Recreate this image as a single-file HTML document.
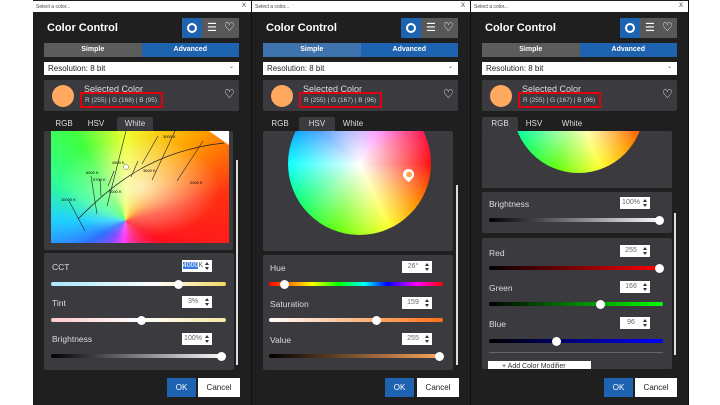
<!DOCTYPE html>
<html><head><meta charset="utf-8">
<style>
*{margin:0;padding:0;box-sizing:border-box}
body{width:720px;height:405px;background:#fff;position:relative;overflow:hidden;font-family:"Liberation Sans",sans-serif}
.p{position:absolute;top:0;width:219px;height:405px;background:#1f1f1f;overflow:hidden;border-right:1px solid #111}
.a{position:absolute}
.tb{left:0;top:1px;width:100%;height:11px;background:#fff;font-size:5px;color:#444;padding:3px 0 0 3px}
.tb span{position:absolute;right:5px;top:2px;font-size:6px}
.tt{left:14px;top:22px;color:#fff;font-weight:bold;font-size:11px}
.ig{left:149px;top:18px;width:57px;height:20px;background:#585858}
.ig .b{position:absolute;left:0;top:0;width:20px;height:20px;background:#1e63b0}
.sa{left:11px;top:43px;width:195px;height:14px;font-size:7px;font-weight:bold;color:#fff;display:flex}
.sa div{flex:1;text-align:center;line-height:14px}
.dd{left:11px;top:62px;width:195px;height:13px;background:#fff;font-size:8px;color:#222;padding:2px 0 0 4px}
.dd span{position:absolute;right:5px;top:1px;font-size:6px;color:#555}
.cd{left:11px;top:80px;width:195px;height:31px;background:#3a3a3f;border-radius:2px}
.sw{left:8px;top:5px;width:22px;height:22px;border-radius:50%;background:#ffa860}
.sc{left:40px;top:4px;font-size:9px;color:#ddd}
.rb{left:36px;top:12px;width:83px;height:16px;border:2px solid #e00010;font-size:6.5px;color:#ccc;padding:3px 0 0 3px}
.ht{left:180px;top:7px;color:#fff;font-size:12px}
.tab{top:117px;height:14px;font-size:8px;color:#ddd;line-height:14px;text-align:center}
.tab.on{background:#3a3a3f;border-radius:2px 2px 0 0}
.box{background:#3a3a3f;border-radius:2px}
.lb{font-size:8.5px;color:#ddd}
.in{width:30px;height:12px;background:#fff;font-size:7px;color:#666;padding:2px 8px 0 0;text-align:center}
.in:after{content:"";position:absolute;right:3px;top:2px;border:2.5px solid transparent;border-bottom:3px solid #333;border-top:0}
.in:before{content:"";position:absolute;right:3px;top:7px;border:2.5px solid transparent;border-top:3px solid #333;border-bottom:0}
.tr{height:4px;border-radius:2px}
.th{width:9px;height:9px;border-radius:50%;background:#fff;margin-top:-2.5px;position:absolute;top:0}
.sb{width:2px;background:#ddd}
.ok{top:378px;width:29px;height:19px;background:#1e63b0;color:#fff;font-size:8px;text-align:center;line-height:19px}
.cn{top:378px;width:42px;height:19px;background:#fff;color:#222;font-size:8px;text-align:center;line-height:19px}
</style></head><body>

<!-- PANEL 1 -->
<div class="p" style="left:33px">
 <div class="a tb">Select a color...<span>X</span></div>
 <div class="a tt">Color Control</div>
 <div class="a ig"><div class="b"><div style="position:absolute;left:5px;top:5px;width:10px;height:10px;border:2.5px solid #fff;border-radius:50%"></div></div>
  <div style="position:absolute;left:25px;top:3px;color:#fff;font-size:11px">☰</div><div style="position:absolute;left:42px;top:2px;color:#fff;font-size:12px">♡</div></div>
 <div class="a sa"><div style="background:#5c5c5c">Simple</div><div style="background:#1e63b0">Advanced</div></div>
 <div class="a dd">Resolution: 8 bit<span>⌄</span></div>
 <div class="a cd"><div class="a sw"></div><div class="a sc">Selected Color</div><div class="a rb">R (255) | G (168) | B (95)</div><div class="a ht">♡</div></div>
 <div class="a tab" style="left:18px;width:26px">RGB</div>
 <div class="a tab" style="left:50px;width:26px">HSV</div>
 <div class="a tab on" style="left:84px;width:36px">White</div>
 <div class="a box" style="left:11px;top:131px;width:189px;height:119px"></div>
 <div class="a" style="left:18px;top:131px;width:178px;height:112px;background:radial-gradient(ellipse 45% 45% at 50% 50%,rgba(255,255,255,.7),rgba(255,255,255,0) 100%),conic-gradient(from 0deg at 42% 80%,#f0ff30 0deg,#ffa000 40deg,#ff3010 75deg,#ff1020 120deg,#ff3090 160deg,#ff40ff 185deg,#8050ff 215deg,#3070ff 240deg,#20d0ff 270deg,#30ff90 300deg,#40ff40 330deg,#f0ff30 360deg)">
  <svg width="178" height="112" style="position:absolute;left:0;top:0" font-family="Liberation Sans" font-size="4" fill="#000">
   <polygon points="158,0 178,0 178,14" fill="#fff"/>
   <path d="M27,88 C60,55 100,20 173,12" stroke="#222" stroke-width=".7" fill="none"/>
   <path d="M18,70 L34,100 M40,45 L46,83 M49,48 L50,65 M63,40 L57,55 M75,0 L56,75 M87,30 L80,46 M107,5 L91,33 M124,0 L101,49 M152,10 L126,50" stroke="#222" stroke-width=".6"/>
   <circle cx="75" cy="36" r="2.5" fill="#fff" stroke="#444" stroke-width=".4"/>
   <text x="112" y="7">3000 K</text><text x="61" y="33">4500 K</text><text x="92" y="41">3500 K</text>
   <text x="35" y="43">6500 K</text><text x="42" y="50">5700 K</text><text x="58" y="62">5000 K</text>
   <text x="139" y="53">2000 K</text><text x="10" y="70">10000 K</text>
  </svg></div>
 <div class="a sb" style="left:203px;top:160px;height:205px"></div>
 <div class="a box" style="left:11px;top:253px;width:190px;height:117px"></div>
 <div class="a lb" style="left:19px;top:262px">CCT</div>
 <div class="a in" style="left:149px;top:260px"><span style="background:#3a7de0;color:#fff">4000</span>K</div>
 <div class="a tr" style="left:18px;top:282px;width:175px;background:linear-gradient(90deg,#a8e8ff,#fff 60%,#f5d860)"><div class="th" style="left:123px"></div></div>
 <div class="a lb" style="left:19px;top:298px">Tint</div>
 <div class="a in" style="left:149px;top:296px">3%</div>
 <div class="a tr" style="left:18px;top:318px;width:175px;background:linear-gradient(90deg,#ffc8c8,#fff 50%,#f5e8a0)"><div class="th" style="left:86px"></div></div>
 <div class="a lb" style="left:19px;top:334px">Brightness</div>
 <div class="a in" style="left:149px;top:333px">100%</div>
 <div class="a tr" style="left:18px;top:354px;width:175px;background:linear-gradient(90deg,#000,#fff)"><div class="th" style="left:166px"></div></div>
 <div class="a ok" style="left:134px">OK</div><div class="a cn" style="left:165px">Cancel</div>
</div>

<!-- PANEL 2 -->
<div class="p" style="left:252px">
 <div class="a tb">Select a color...<span>X</span></div>
 <div class="a tt">Color Control</div>
 <div class="a ig"><div class="b"><div style="position:absolute;left:5px;top:5px;width:10px;height:10px;border:2.5px solid #fff;border-radius:50%"></div></div>
  <div style="position:absolute;left:25px;top:3px;color:#fff;font-size:11px">☰</div><div style="position:absolute;left:42px;top:2px;color:#fff;font-size:12px">♡</div></div>
 <div class="a sa"><div style="background:#3f73ad">Simple</div><div style="background:#1e63b0">Advanced</div></div>
 <div class="a dd">Resolution: 8 bit<span>⌄</span></div>
 <div class="a cd"><div class="a sw"></div><div class="a sc">Selected Color</div><div class="a rb">R (255) | G (167) | B (96)</div><div class="a ht">♡</div></div>
 <div class="a tab" style="left:15px;width:26px">RGB</div>
 <div class="a tab on" style="left:47px;width:36px">HSV</div>
 <div class="a tab" style="left:86px;width:30px">White</div>
 <div class="a box" style="left:11px;top:131px;width:190px;height:120px;overflow:hidden">
  <div style="position:absolute;left:25px;top:-39px;width:143px;height:143px;border-radius:50%;background:radial-gradient(circle,#fff 0%,rgba(255,255,255,0) 70%),conic-gradient(#a070ff 0deg,#ff40ff 30deg,#ff2060 60deg,#ff1010 90deg,#ff9000 125deg,#ffff30 155deg,#60ff10 200deg,#10ff80 240deg,#10ffff 270deg,#1080ff 310deg,#a070ff 360deg)"></div>
  <div style="position:absolute;left:140px;top:38px;width:11px;height:11px;border-radius:50% 50% 50% 0;transform:rotate(-45deg);background:#fff"><div style="margin:2.5px;width:6px;height:6px;border-radius:50%;background:#ffa860"></div></div>
 </div>
 <div class="a sb" style="left:204px;top:185px;height:180px"></div>
 <div class="a box" style="left:11px;top:255px;width:190px;height:115px"></div>
 <div class="a lb" style="left:18px;top:263px">Hue</div>
 <div class="a in" style="left:150px;top:261px">26°</div>
 <div class="a tr" style="left:17px;top:282px;width:174px;background:linear-gradient(90deg,#f00,#ff0 25%,#0f0 40%,#0ff 55%,#00f 68%,#f0f 85%,#f00)"><div class="th" style="left:11px"></div></div>
 <div class="a lb" style="left:18px;top:299px">Saturation</div>
 <div class="a in" style="left:150px;top:297px">159</div>
 <div class="a tr" style="left:17px;top:318px;width:174px;background:linear-gradient(90deg,#fff,#ff7010)"><div class="th" style="left:103px"></div></div>
 <div class="a lb" style="left:18px;top:335px">Value</div>
 <div class="a in" style="left:150px;top:333px">255</div>
 <div class="a tr" style="left:17px;top:354px;width:174px;background:linear-gradient(90deg,#000,#ffa860)"><div class="th" style="left:166px"></div></div>
 <div class="a ok" style="left:133px">OK</div><div class="a cn" style="left:165px">Cancel</div>
</div>

<!-- PANEL 3 -->
<div class="p" style="left:471px;width:218px">
 <div class="a tb">Select a color...<span>X</span></div>
 <div class="a tt">Color Control</div>
 <div class="a ig"><div class="b"><div style="position:absolute;left:5px;top:5px;width:10px;height:10px;border:2.5px solid #fff;border-radius:50%"></div></div>
  <div style="position:absolute;left:25px;top:3px;color:#fff;font-size:11px">☰</div><div style="position:absolute;left:42px;top:2px;color:#fff;font-size:12px">♡</div></div>
 <div class="a sa"><div style="background:#5c5c5c">Simple</div><div style="background:#1e63b0">Advanced</div></div>
 <div class="a dd">Resolution: 8 bit<span>⌄</span></div>
 <div class="a cd"><div class="a sw"></div><div class="a sc">Selected Color</div><div class="a rb">R (255) | G (167) | B (96)</div><div class="a ht">♡</div></div>
 <div class="a tab on" style="left:11px;width:36px">RGB</div>
 <div class="a tab" style="left:50px;width:26px">HSV</div>
 <div class="a tab" style="left:86px;width:30px">White</div>
 <div class="a box" style="left:11px;top:131px;width:190px;height:57px;overflow:hidden">
  <div style="position:absolute;left:31px;top:-89px;width:131px;height:131px;border-radius:50%;background:radial-gradient(circle,#fff 0%,rgba(255,255,255,0) 70%),conic-gradient(#a070ff 0deg,#ff40ff 30deg,#ff2060 60deg,#ff1010 90deg,#ff9000 125deg,#ffff30 160deg,#60ff10 200deg,#10ff80 240deg,#10ffff 270deg,#1080ff 310deg,#a070ff 360deg)"></div>
 </div>
 <div class="a box" style="left:11px;top:192px;width:190px;height:41px"></div>
 <div class="a lb" style="left:18px;top:199px">Brightness</div>
 <div class="a in" style="left:149px;top:197px">100%</div>
 <div class="a tr" style="left:18px;top:218px;width:174px;background:linear-gradient(90deg,#000,#fff)"><div class="th" style="left:166px"></div></div>
 <div class="a sb" style="left:203px;top:213px;height:142px"></div>
 <div class="a box" style="left:11px;top:238px;width:190px;height:131px;overflow:hidden">
  <div style="position:absolute;left:6px;top:123px;width:103px;height:12px;background:#fff;font-size:7px;color:#333;padding:2px 0 0 14px">+ Add Color Modifier</div>
 </div>
 <div class="a lb" style="left:18px;top:248px">Red</div>
 <div class="a in" style="left:149px;top:245px">255</div>
 <div class="a tr" style="left:18px;top:266px;width:174px;background:linear-gradient(90deg,#000,#f00)"><div class="th" style="left:166px"></div></div>
 <div class="a lb" style="left:18px;top:283px">Green</div>
 <div class="a in" style="left:149px;top:281px">166</div>
 <div class="a tr" style="left:18px;top:302px;width:174px;background:linear-gradient(90deg,#000,#0f0)"><div class="th" style="left:107px"></div></div>
 <div class="a lb" style="left:18px;top:319px">Blue</div>
 <div class="a in" style="left:149px;top:317px">96</div>
 <div class="a tr" style="left:18px;top:339px;width:174px;background:linear-gradient(90deg,#000,#00f)"><div class="th" style="left:63px"></div></div>
 <div class="a" style="left:18px;top:352px;width:174px;height:1px;background:#666"></div>
 <div class="a ok" style="left:133px">OK</div><div class="a cn" style="left:164px">Cancel</div>
</div>
</body></html>
